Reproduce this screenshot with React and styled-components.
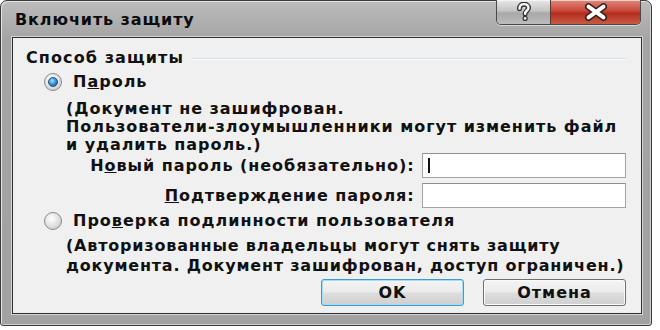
import React from "react";
import styled, { createGlobalStyle } from "styled-components";

const GlobalStyle = createGlobalStyle`
  body {
    margin: 0;
    background: #ffffff;
  }
`;

const Window = styled.div`
  width: 652px;
  height: 326px;
  box-sizing: border-box;
  border: 1px solid #3a3a3a;
  border-radius: 7px 7px 3px 3px;
  background: linear-gradient(180deg, #bcbcbc 0%, #a4a4a4 12%, #a2a2a2 100%);
  box-shadow: inset 1px 1px 0 #e4e4e4, inset -1px -1px 0 #d0d0d0;
  display: flex;
  flex-direction: column;
  padding: 0 9px 11px 11px;
  font-family: "DejaVu Sans", "Liberation Sans", sans-serif;
  font-weight: bold;
  color: #111;
  white-space: nowrap;
`;

const TitleBar = styled.div`
  height: 36px;
  flex-shrink: 0;
  display: flex;
  align-items: flex-start;
`;

const Title = styled.div`
  font-size: 16px;
  letter-spacing: 0.9px;
  padding: 9px 0 0 3px;
  color: #0c0c0c;
  flex: 1;
`;

const Caption = styled.div`
  display: flex;
  margin-top: -1px;
  margin-right: 1px;
  border: 1px solid #4a4a4a;
  border-top: none;
  border-radius: 0 0 5px 5px;
  overflow: hidden;
  box-shadow: 0 1px 0 #d8d8d8;
`;

const CaptionButton = styled.div`
  height: 24px;
  width: ${(p) => p.$w}px;
  display: flex;
  align-items: center;
  justify-content: center;
  background: ${(p) =>
    p.$close
      ? "linear-gradient(180deg, #e08a7c 0%, #c9473a 45%, #b22c1e 55%, #c85a44 100%)"
      : "linear-gradient(180deg, #e8e8e8 0%, #c4c4c4 45%, #a8a8a8 55%, #bdbdbd 100%)"};
  border-left: ${(p) => (p.$close ? "1px solid #5a3a34" : "none")};
  box-shadow: inset 0 1px 0 rgba(255, 255, 255, 0.6);
`;

const Client = styled.div`
  flex: 1;
  min-height: 0;
  border: 1px solid #2e2e2e;
  box-shadow: 0 0 0 1px #d6d6d6;
  background: #f0f0f0;
  display: flex;
  flex-direction: column;
  padding: 11px 15px 0 13px;

  & > * {
    flex-shrink: 0;
  }
`;

const Legend = styled.div`
  display: flex;
  align-items: center;
  gap: 8px;
  font-size: 16px;
  letter-spacing: 1.1px;
  line-height: 18px;
`;

const LegendLine = styled.div`
  flex: 1;
  height: 1px;
  background: #d5dfe5;
  box-shadow: 0 1px 0 #ffffff;
`;

const RadioRow = styled.div`
  display: flex;
  align-items: center;
  margin: ${(p) => p.$mt}px 0 0 18px;
  font-size: 16px;
  letter-spacing: 1px;
  line-height: 18px;
`;

const RadioCircle = styled.div`
  width: 18px;
  height: 18px;
  box-sizing: border-box;
  border-radius: 50%;
  border: 1px solid #8a8a8a;
  background: radial-gradient(circle at 40% 35%, #ffffff 0%, #dcdcdc 60%, #bcbcbc 100%);
  display: flex;
  align-items: center;
  justify-content: center;
  margin-right: 11px;
`;

const RadioDot = styled.div`
  width: 10px;
  height: 10px;
  border-radius: 50%;
  border: 1px solid #1d4f7c;
  box-sizing: border-box;
  background: radial-gradient(circle at 40% 35%, #a6e0ff 0%, #2d8ad6 55%, #0f4c8c 100%);
`;

const Description = styled.div`
  margin: ${(p) => p.$mt}px 0 0 40px;
  font-size: 16px;
  letter-spacing: ${(p) => p.$ls}px;
  line-height: ${(p) => p.$lh}px;
`;

const FieldRow = styled.div`
  display: flex;
  align-items: center;
  margin-top: ${(p) => p.$mt}px;
`;

const FieldLabel = styled.label`
  width: 390px;
  text-align: right;
  padding-right: 7px;
  font-size: 16px;
  letter-spacing: 0.95px;
`;

const TextBox = styled.div`
  width: 205px;
  height: 25px;
  box-sizing: border-box;
  background: #ffffff;
  border: 1px solid #a3a3a3;
  border-top-color: #8f8f8f;
  display: flex;
  align-items: center;
  padding-left: 5px;
`;

const Caret = styled.div`
  width: 2px;
  height: 15px;
  background: #111;
`;

const Buttons = styled.div`
  display: flex;
  justify-content: flex-end;
  gap: 19px;
  margin-top: 3px;
`;

const Button = styled.div`
  width: 143px;
  height: 27px;
  box-sizing: border-box;
  border-radius: 3px;
  border: 1px solid ${(p) => (p.$default ? "#3c9ad6" : "#707070")};
  box-shadow: inset 0 0 0 1px ${(p) => (p.$default ? "#a6dcf6" : "#fbfbfb")};
  background: linear-gradient(180deg, #f4f4f4 0%, #ebebeb 48%, #dddddd 52%, #cfcfcf 100%);
  display: flex;
  align-items: center;
  justify-content: center;
  font-size: 16px;
  letter-spacing: 1px;
`;

const HelpIcon = () => (
  <svg width="18" height="20" viewBox="0 0 16 17">
    <path
      d="M4 5.5 C4 2.5 6 1.5 8 1.5 C10.5 1.5 12 3 12 5 C12 7 9 7.5 9 10"
      fill="none"
      stroke="#333"
      strokeWidth="4.5"
      strokeLinecap="round"
    />
    <path
      d="M4 5.5 C4 2.5 6 1.5 8 1.5 C10.5 1.5 12 3 12 5 C12 7 9 7.5 9 10"
      fill="none"
      stroke="#f4f4f4"
      strokeWidth="2.2"
      strokeLinecap="round"
    />
    <circle cx="9" cy="14.2" r="2.3" fill="#333" />
    <circle cx="9" cy="14.2" r="1.2" fill="#f4f4f4" />
  </svg>
);

const CloseIcon = () => (
  <svg width="28" height="18" viewBox="0 0 26 16">
    <path d="M6 3 L20 13 M20 3 L6 13" stroke="#3a2420" strokeWidth="6.5" strokeLinecap="round" />
    <path d="M6 3 L20 13 M20 3 L6 13" stroke="#ffffff" strokeWidth="3.6" strokeLinecap="round" />
  </svg>
);

const Radio = ({ checked }) => (
  <RadioCircle>{checked && <RadioDot />}</RadioCircle>
);

export default function App() {
  return (
    <>
      <GlobalStyle />
      <Window>
        <TitleBar>
          <Title>Включить защиту</Title>
          <Caption>
            <CaptionButton $w={53}>
              <HelpIcon />
            </CaptionButton>
            <CaptionButton $w={89} $close>
              <CloseIcon />
            </CaptionButton>
          </Caption>
        </TitleBar>
        <Client>
          <Legend>
            Способ защиты
            <LegendLine />
          </Legend>
          <RadioRow $mt={6}>
            <Radio checked />
            <span>
              П<u>а</u>роль
            </span>
          </RadioRow>
          <Description $mt={9} $lh={18} $ls={0.95}>
            (Документ не зашифрован.
            <br />
            Пользователи-злоумышленники могут изменить файл
            <br />и удалить пароль.)
          </Description>
          <FieldRow $mt={-1}>
            <FieldLabel>
              Н<u>о</u>вый пароль (необязательно):
            </FieldLabel>
            <TextBox>
              <Caret />
            </TextBox>
          </FieldRow>
          <FieldRow $mt={5}>
            <FieldLabel>
              <u>П</u>одтверждение пароля:
            </FieldLabel>
            <TextBox />
          </FieldRow>
          <RadioRow $mt={4}>
            <Radio />
            <span>
              Про<u>в</u>ерка подлинности пользователя
            </span>
          </RadioRow>
          <Description $mt={6} $lh={20} $ls={0.8}>
            (Авторизованные владельцы могут снять защиту
            <br />
            документа. Документ зашифрован, доступ ограничен.)
          </Description>
          <Buttons>
            <Button $default>OK</Button>
            <Button>Отмена</Button>
          </Buttons>
        </Client>
      </Window>
    </>
  );
}
